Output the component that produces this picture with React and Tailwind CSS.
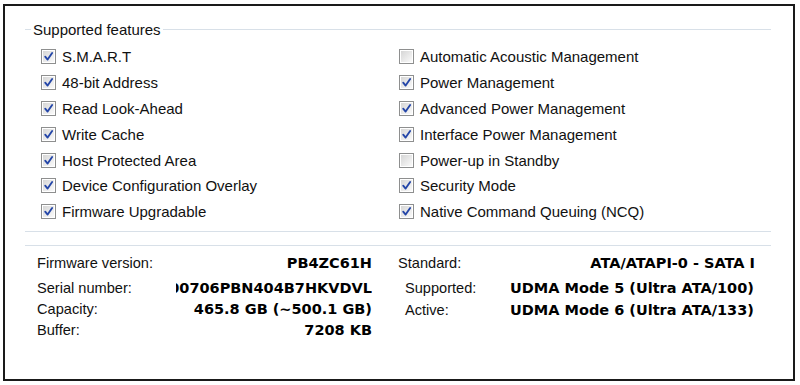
const leftFeatures = [
  { label: "S.M.A.R.T", checked: true },
  { label: "48-bit Address", checked: true },
  { label: "Read Look-Ahead", checked: true },
  { label: "Write Cache", checked: true },
  { label: "Host Protected Area", checked: true },
  { label: "Device Configuration Overlay", checked: true },
  { label: "Firmware Upgradable", checked: true },
];

const rightFeatures = [
  { label: "Automatic Acoustic Management", checked: false },
  { label: "Power Management", checked: true },
  { label: "Advanced Power Management", checked: true },
  { label: "Interface Power Management", checked: true },
  { label: "Power-up in Standby", checked: false },
  { label: "Security Mode", checked: true },
  { label: "Native Command Queuing (NCQ)", checked: true },
];

function CheckBox({ checked }) {
  return (
    <span className="w-[15px] h-[15px] shrink-0 border border-[#8e8f8f] bg-white p-[1px]">
      <span className="relative block w-full h-full bg-linear-to-br from-[#d6d6d6] to-[#fafafa]">
        {checked && (
          <svg viewBox="0 0 10 10" className="absolute inset-0 w-full h-full">
            <path
              d="M2 5.2 L4.2 7.8 L8.3 1.8"
              fill="none"
              stroke="#2446a8"
              strokeWidth="1.7"
              strokeLinecap="round"
              strokeLinejoin="round"
            />
          </svg>
        )}
      </span>
    </span>
  );
}

function Feature({ label, checked }) {
  return (
    <div className="h-[25.8px] flex items-center gap-[6px]">
      <CheckBox checked={checked} />
      <span className="text-[15px] leading-none text-[#111]">{label}</span>
    </div>
  );
}

export default function App() {
  const label = "font-['Liberation_Sans',Arial,sans-serif] text-[14.6px] text-[#111]";
  const value =
    "font-['DejaVu_Sans',Verdana,sans-serif] font-bold text-[14.5px] text-black whitespace-nowrap";

  return (
    <div className="w-[800px] h-[385px] bg-white font-['Liberation_Sans',Arial,sans-serif]">
      <div className="ml-[3px] mt-[4px] w-[792px] h-[377px] border-2 border-[#1a1a1a] bg-white flex flex-col">
        {/* group box */}
        <div className="ml-[20px] mr-[22px] pt-[15px]">
          <div className="h-[16px] flex items-center">
            <div className="w-[6px] h-px bg-[#d8e0e8]" />
            <span className="px-[2px] text-[15px] leading-none text-[#111]">
              Supported features
            </span>
            <div className="flex-1 h-px bg-[#d8e0e8]" />
          </div>

          <div className="mt-[7px] pl-[16px] grid grid-cols-[358px_1fr]">
            <div>
              {leftFeatures.map((f) => (
                <Feature key={f.label} {...f} />
              ))}
            </div>
            <div>
              {rightFeatures.map((f) => (
                <Feature key={f.label} {...f} />
              ))}
            </div>
          </div>

          <div className="mt-[6px] h-px bg-[#d8e0e8]" />
          <div className="mt-[13px] h-px bg-[#d8e0e8]" />
        </div>

        {/* drive info */}
        <div className="mt-[8px] pl-[32px] grid grid-cols-[335px_357px] gap-x-[26px]">
          <div className="flex flex-col">
            <div className="h-[20px] flex items-center justify-between">
              <span className={label}>Firmware version:</span>
              <span className={value}>PB4ZC61H</span>
            </div>
            <div className="mt-[5px] h-[20px] flex items-center">
              <span className={`${label} w-[139px] shrink-0`}>Serial number:</span>
              <div className="flex-1 flex justify-end overflow-hidden">
                <span className={`${value} shrink-0`}>S1D00706PBN404B7HKVDVL</span>
              </div>
            </div>
            <div className="mt-[1px] h-[20px] flex items-center justify-between">
              <span className={label}>Capacity:</span>
              <span className={value}>465.8 GB (~500.1 GB)</span>
            </div>
            <div className="mt-[1px] h-[20px] flex items-center justify-between">
              <span className={label}>Buffer:</span>
              <span className={value}>7208 KB</span>
            </div>
          </div>

          <div className="flex flex-col">
            <div className="h-[20px] flex items-center justify-between">
              <span className={label}>Standard:</span>
              <span className={value}>ATA/ATAPI-0 - SATA I</span>
            </div>
            <div className="mt-[5px] pl-[7px] h-[20px] flex items-center">
              <span className={`${label} w-[105px] shrink-0`}>Supported:</span>
              <span className={value}>UDMA Mode 5 (Ultra ATA/100)</span>
            </div>
            <div className="mt-[2px] pl-[7px] h-[20px] flex items-center">
              <span className={`${label} w-[105px] shrink-0`}>Active:</span>
              <span className={value}>UDMA Mode 6 (Ultra ATA/133)</span>
            </div>
          </div>
        </div>
      </div>
    </div>
  );
}
